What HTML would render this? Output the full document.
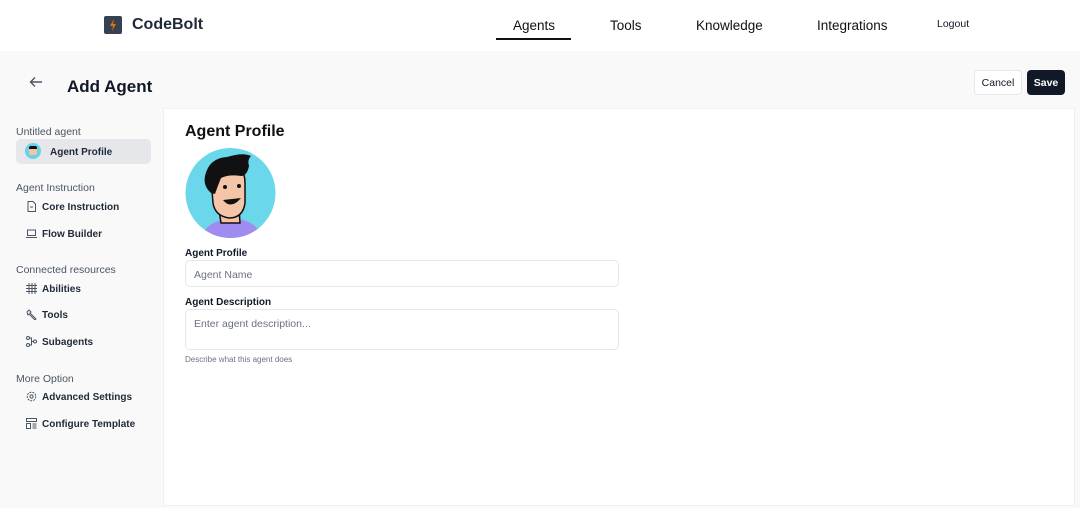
<!DOCTYPE html>
<html><head><style>
*{box-sizing:border-box;margin:0;padding:0}
body{width:1080px;height:508px;overflow:hidden;background:#f9f9fa;font-family:"Liberation Sans",sans-serif;color:#111827;position:relative}
.hdr{position:absolute;left:0;top:0;width:1080px;height:51px;background:#fff}
.abs{position:absolute;white-space:nowrap}
.nav{font-size:13.5px;color:#111}
.side{font-size:10.5px;color:#4b5563}
.item{font-size:10px;font-weight:bold;color:#1f2937}
.ic{position:absolute;width:11px;height:11px}
</style></head><body>
<div class="hdr"></div>
<div class="abs" style="left:104px;top:16px;width:18px;height:18px;background:#374151;border-radius:2px"></div>
<svg class="abs" style="left:104px;top:16px" width="18" height="18"><path d="M10 3 L6 10 L9 10 L8 15 L12 8 L9 8 Z" fill="#d97706"/></svg>
<div class="abs" style="left:132px;top:16px;font-size:16px;font-weight:bold;color:#1f2937">CodeBolt</div>
<div class="abs nav" style="left:513px;top:18px">Agents</div>
<div class="abs" style="left:496px;top:38px;width:75px;height:2px;background:#111"></div>
<div class="abs nav" style="left:610px;top:18px">Tools</div>
<div class="abs nav" style="left:696px;top:18px">Knowledge</div>
<div class="abs nav" style="left:817px;top:18px">Integrations</div>
<div class="abs" style="left:937px;top:18px;font-size:10.5px">Logout</div>

<svg class="abs" style="left:29px;top:76px" width="14" height="12"><path d="M13 6H2M6 1.5L1.5 6L6 10.5" stroke="#4b5563" stroke-width="1.4" fill="none"/></svg>
<div class="abs" style="left:67px;top:77px;font-size:17px;font-weight:bold">Add Agent</div>
<div class="abs" style="left:974px;top:70px;width:48px;height:25px;background:#fff;border:1px solid #e5e7eb;border-radius:4px;font-size:10.5px;text-align:center;line-height:25px">Cancel</div>
<div class="abs" style="left:1027px;top:70px;width:38px;height:25px;background:#111827;color:#fff;border-radius:4px;font-size:10.5px;font-weight:bold;text-align:center;line-height:27px">Save</div>

<div class="abs" style="left:163px;top:108px;width:912px;height:398px;background:#fff;border:1px solid #f0f0f0"></div>

<div class="abs side" style="left:16px;top:126px">Untitled agent</div>
<div class="abs" style="left:16px;top:139px;width:135px;height:25px;background:#e5e7eb;border-radius:5px"></div>
<div class="abs" style="left:25px;top:143px;width:16px;height:16px;border-radius:50%;background:#67d3e8;overflow:hidden"><div style="margin:3px 0 0 4px;width:8px;height:9px;background:#f5c4a5;border-top:3px solid #111;border-radius:2px"></div></div>
<div class="abs item" style="left:50px;top:147px">Agent Profile</div>

<div class="abs side" style="left:16px;top:182px">Agent Instruction</div>
<svg class="ic" style="left:26px;top:201px" viewBox="0 0 11 11"><path d="M2 .5h5l2.5 2.5v7.5h-7.5z M4 6h3" stroke="#4b5563" fill="none"/></svg>
<div class="abs item" style="left:42px;top:202px">Core Instruction</div>
<svg class="ic" style="left:26px;top:228px" viewBox="0 0 11 11"><path d="M1.5 2h8v5.5h-8z M0 9.5h11" stroke="#4b5563" fill="none"/></svg>
<div class="abs item" style="left:42px;top:229px">Flow Builder</div>

<div class="abs side" style="left:16px;top:264px">Connected resources</div>
<svg class="ic" style="left:26px;top:283px" viewBox="0 0 11 11"><path d="M3 0v11M6 0v11M9 0v11M0 2.5h11M0 5.5h11M0 8.5h11" stroke="#4b5563" fill="none"/></svg>
<div class="abs item" style="left:42px;top:284px">Abilities</div>
<svg class="ic" style="left:26px;top:309px" viewBox="0 0 11 11"><path d="M1 3l2-2 2 2-1 1 6 6-1 1-6-6-1 1z" stroke="#4b5563" fill="none"/></svg>
<div class="abs item" style="left:42px;top:310px">Tools</div>
<svg class="ic" style="left:26px;top:336px" viewBox="0 0 11 11"><circle cx="2" cy="2" r="1.5" stroke="#4b5563" fill="none"/><circle cx="2" cy="9" r="1.5" stroke="#4b5563" fill="none"/><circle cx="9" cy="5.5" r="1.5" stroke="#4b5563" fill="none"/><path d="M3.5 2h2v7h-2M5.5 5.5h2" stroke="#4b5563" fill="none"/></svg>
<div class="abs item" style="left:42px;top:337px">Subagents</div>

<div class="abs side" style="left:16px;top:373px">More Option</div>
<svg class="ic" style="left:26px;top:391px" viewBox="0 0 11 11"><circle cx="5.5" cy="5.5" r="4.3" stroke="#4b5563" stroke-dasharray="2 1" fill="none"/><circle cx="5.5" cy="5.5" r="1.6" stroke="#4b5563" fill="none"/></svg>
<div class="abs item" style="left:42px;top:392px">Advanced Settings</div>
<svg class="ic" style="left:26px;top:418px" viewBox="0 0 11 11"><path d="M.5 .5h10v3h-10z M.5 5.5h4v5h-4z M6.5 6h4M6.5 8h4M6.5 10h4" stroke="#4b5563" fill="none"/></svg>
<div class="abs item" style="left:42px;top:419px">Configure Template</div>

<div class="abs" style="left:185px;top:123px;font-size:16px;font-weight:bold;color:#111">Agent Profile</div>
<svg class="abs" style="left:185px;top:148px" width="91" height="90" viewBox="0 0 91 90">
<defs><clipPath id="c"><circle cx="45.5" cy="45" r="45"/></clipPath></defs>
<circle cx="45.5" cy="45" r="45" fill="#6bd7ea"/>
<g clip-path="url(#c)">
<path d="M15 92 Q20 75 38 72 L58 72 Q74 76 78 92Z" fill="#a08cf0"/>
<path d="M34 62 L36 75 L55 75 L54 60Z" fill="#f3c1a3" stroke="#111" stroke-width="1.5"/>
<path d="M26 30 Q26 18 42 16 Q60 16 60 35 L60 55 Q58 70 44 70 Q30 68 28 55Z" fill="#f5c5a7" stroke="#111" stroke-width="1.5"/>
<path d="M20 28 Q24 10 42 9 Q58 4 66 8 Q62 12 64 18 Q62 28 56 28 Q44 26 36 30 Q32 40 30 46 L26 45 Q18 38 20 28Z" fill="#111"/>
<circle cx="40" cy="39" r="2" fill="#111"/><circle cx="54" cy="38" r="2" fill="#111"/>
<path d="M38 52 Q46 62 56 50 Z" fill="#111"/>
</g></svg>
<div class="abs" style="left:185px;top:248px;font-size:10px;font-weight:bold">Agent Profile</div>
<div class="abs" style="left:185px;top:260px;width:434px;height:27px;border:1px solid #e5e7eb;border-radius:5px;font-size:10.5px;color:#6b7280;padding:8px 8px">Agent Name</div>
<div class="abs" style="left:185px;top:297px;font-size:10px;font-weight:bold">Agent Description</div>
<div class="abs" style="left:185px;top:309px;width:434px;height:41px;border:1px solid #e5e7eb;border-radius:5px;font-size:10.5px;color:#6b7280;padding:8px 8px">Enter agent description...</div>
<div class="abs" style="left:185px;top:355px;font-size:8px;color:#6b7280">Describe what this agent does</div>
</body></html>
